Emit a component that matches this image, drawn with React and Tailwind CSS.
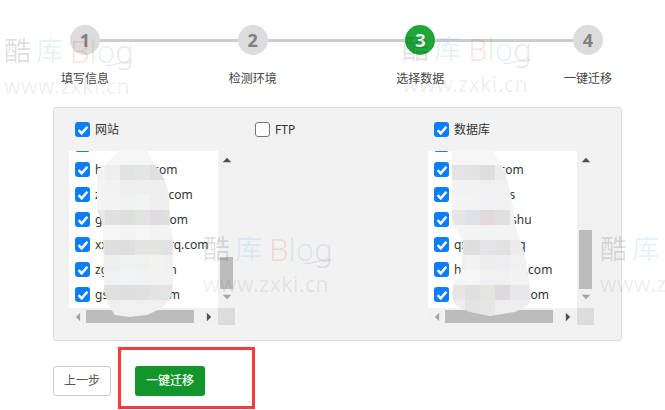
const Check = ({ on = true }) =>
  on ? (
    <span className="flex h-[15px] w-[15px] shrink-0 items-center justify-center rounded-[3px] bg-[#0b7dfd]">
      <svg width="12" height="12" viewBox="0 0 12 12" fill="none">
        <path d="M1.6 6.2 4.7 9.3 10.4 2.8" stroke="#fff" strokeWidth="2.5" />
      </svg>
    </span>
  ) : (
    <span className="h-[15px] w-[15px] shrink-0 rounded-[3px] border border-[#767676] bg-white" />
  );

const Arrow = ({ dir, className }) => {
  const d = { up: "M0 6 5 1 10 6Z", down: "M0 1 10 1 5 6Z", left: "M6 0 6 10 1 5Z", right: "M1 0 1 10 6 5Z" }[dir];
  const horizontal = dir === "left" || dir === "right";
  return (
    <svg width={horizontal ? 7 : 10} height={horizontal ? 10 : 7} viewBox={horizontal ? "0 0 7 10" : "0 0 10 7"} className={className}>
      <path d={d} />
    </svg>
  );
};

const ListBox = ({ rows, thumbTop, thumbHeight }) => (
  <div className="grid w-[166px] grid-cols-[149px_17px] grid-rows-[157px_17px]">
    <div className="overflow-hidden bg-white">
      <div className="-mt-[19px]">
        {rows.map((r, i) => (
          <div key={i} className="flex h-[25px] items-center gap-[5px] whitespace-nowrap pl-[6px] text-[12px] leading-[25px] text-[#333]">
            <Check />
            <span>{r}</span>
          </div>
        ))}
      </div>
    </div>
    <div className="flex flex-col items-center bg-[#f1f1f1]">
      <Arrow dir="up" className="mt-[6px] h-[6px] fill-[#505050]" />
      <div className="w-[13px] shrink-0 bg-[#bcbcbc]" style={{ marginTop: thumbTop, height: thumbHeight }} />
      <Arrow dir="down" className="mt-[5px] h-[6px] fill-[#a3a3a3]" />
    </div>
    <div className="flex items-center bg-[#f1f1f1]">
      <Arrow dir="left" className="ml-[6px] w-[6px] fill-[#a3a3a3]" />
      <div className="ml-[5px] h-[13px] w-[108px] bg-[#bcbcbc]" />
      <Arrow dir="right" className="ml-[12px] w-[6px] fill-[#505050]" />
    </div>
    <div className="bg-[#dcdcdc]" />
  </div>
);

const Header = ({ label, on }) => (
  <div className="flex h-[15px] items-center gap-[5px] pl-[6px] text-[12px] leading-[15px] text-[#333]">
    <Check on={on} />
    <span>{label}</span>
  </div>
);

const steps = [
  ["1", "填写信息"],
  ["2", "检测环境"],
  ["3", "选择数据"],
  ["4", "一键迁移"],
];

const Watermark = ({ className }) => (
  <div className={"pointer-events-none absolute w-[130px] " + className}>
    <div className="flex h-[42px] items-center whitespace-nowrap text-[27px] leading-[42px]">
      <span className="text-[#000]/[.13]">酷</span>
      <span className="ml-[5px] text-[#2b9ae8]/[.13]">库</span>
      <span className="ml-[7px] text-[31px] font-light">
        <span className="text-[#e8483c]/[.17]">B</span>
        <span className="text-[#3bb04a]/[.17]">l</span>
        <span className="text-[#3a95d8]/[.15]">o</span>
        <span className="text-[#4a4a9a]/[.14]">g</span>
      </span>
    </div>
    <svg width="30" height="8" viewBox="0 0 30 8" fill="none" className="absolute left-[100px] top-[30px]">
      <path d="M1 5C7 7 12 3 17 3C22 3 25 4 28 1" stroke="#4a4a9a" strokeOpacity=".14" strokeWidth="1.2" />
    </svg>
    <div className="mt-[3px] whitespace-nowrap text-[21px] leading-[22px] tracking-[.5px] text-[#000]/[.08]">www.zxki.cn</div>
  </div>
);

const leftCells = [
  "bg-[#f6f6f6]", "bg-[#f6f6f6]", "bg-[#f6f6f6]", "bg-[#f6f6f6]", "bg-[#f6f6f6]", "bg-[#f6f6f6]",
  "bg-[#f2f2f2]", "bg-[#eeeeee]", "bg-[#e2e2e2]", "bg-[#e2e6e6]", "bg-[#dfdfdf]", "bg-[#e8e8e8]",
  "bg-[#f4f4f4]", "bg-[#f2f2f2]", "bg-[#eeeeee]", "bg-[#eeeeee]", "bg-[#eeeeee]", "bg-[#f0f0f0]",
  "bg-[#f4f4f4]", "bg-[#f3f3f3]", "bg-[#f1f1f1]", "bg-[#f1f4f2]", "bg-[#efefef]", "bg-[#f0f0f0]",
  "bg-[#e8e8e8]", "bg-[#e0e0e0]", "bg-[#dfdfdf]", "bg-[#e2e4e2]", "bg-[#dedcde]", "bg-[#dfdfdd]",
  "bg-[#f4f4f4]", "bg-[#f5f5f5]", "bg-[#f4f4f4]", "bg-[#f5f5f5]", "bg-[#f3f3f3]", "bg-[#f2f2f2]",
  "bg-[#e4e4e4]", "bg-[#dfdfdf]", "bg-[#dedede]", "bg-[#e3e3e3]", "bg-[#e3e3df]", "bg-[#e2e2e2]",
  "bg-[#f0f0f0]", "bg-[#eeeeee]", "bg-[#f0f2f2]", "bg-[#f0f0f0]", "bg-[#f2f2f0]", "bg-[#f0f0f0]",
  "bg-[#f4f4f4]", "bg-[#f2f2f2]", "bg-[#f1f4f4]", "bg-[#f2f2f2]", "bg-[#f2f2f2]", "bg-[#f2f2f2]",
  "bg-[#e6e6e6]", "bg-[#e0e0e0]", "bg-[#dedfe0]", "bg-[#e0e0e0]", "bg-[#e2e4e4]", "bg-[#e4e4e4]",
  "bg-[#f0f0f0]", "bg-[#f0f0f0]", "bg-[#f0f0f0]", "bg-[#f0f0f0]", "bg-[#f0f0f0]", "bg-[#f0f0f0]",
  "bg-[#efefef]", "bg-[#efefef]", "bg-[#efefef]", "bg-[#efefef]", "bg-[#efefef]", "bg-[#efefef]",
];

const rightCells = [
  "bg-[#f6f6f6]", "bg-[#f6f6f6]", "bg-[#f6f6f6]", "bg-[#f6f6f6]", "bg-[#f6f6f6]", "bg-[#f6f6f6]",
  "bg-[#e4e4e4]", "bg-[#e2e2e2]", "bg-[#dedede]", "bg-[#ececec]", "bg-[#f0f0f0]", "bg-[#f0f0f0]",
  "bg-[#f2f2f2]", "bg-[#f2f2f2]", "bg-[#f0f0f0]", "bg-[#f1f1f1]", "bg-[#f2f2f2]", "bg-[#f2f2f2]",
  "bg-[#f4f4f4]", "bg-[#f3f3f3]", "bg-[#f1f1f4]", "bg-[#f0f0f0]", "bg-[#f3f3f3]", "bg-[#f3f3f3]",
  "bg-[#e6e4e4]", "bg-[#dde2e6]", "bg-[#e3d9dc]", "bg-[#e0e0e0]", "bg-[#f0f0f0]", "bg-[#f0f0f0]",
  "bg-[#f4f4f4]", "bg-[#f4f4f4]", "bg-[#f3f3f3]", "bg-[#f3f3f3]", "bg-[#f3f3f3]", "bg-[#f3f3f3]",
  "bg-[#e2e2e2]", "bg-[#dfdfdf]", "bg-[#e4e4e6]", "bg-[#e2e2e2]", "bg-[#ececec]", "bg-[#ececec]",
  "bg-[#eeeeee]", "bg-[#f2f2f2]", "bg-[#ededed]", "bg-[#eeeef0]", "bg-[#f0f0f0]", "bg-[#f0f0f0]",
  "bg-[#f5f5f5]", "bg-[#f5f5f5]", "bg-[#f0f0f0]", "bg-[#f0f0f0]", "bg-[#f2f2f2]", "bg-[#f2f2f2]",
  "bg-[#e6e6e6]", "bg-[#e0e0e0]", "bg-[#e4e4e0]", "bg-[#dddadd]", "bg-[#e8e8ea]", "bg-[#e8e8ea]",
  "bg-[#eeeeee]", "bg-[#e3e3e3]", "bg-[#e6e6e6]", "bg-[#eeeeee]", "bg-[#eeeeee]", "bg-[#eeeeee]",
  "bg-[#efefef]", "bg-[#efefef]", "bg-[#efefef]", "bg-[#efefef]", "bg-[#efefef]", "bg-[#efefef]",
];

const Mosaic = ({ cells, className }) => (
  <div className={"pointer-events-none absolute grid w-[90px] grid-cols-[repeat(6,15px)] auto-rows-[15px] " + className}>
    {cells.map((c, i) => (
      <div key={i} className={c} />
    ))}
  </div>
);

const leftRows = ["", "hxxxxxxix.com", "zxxxxxxxxxn.com", "gxxxxxxxxn.com", "xxuxxxxxxxxirq.com", "zgxxxxxxi.com", "gsxxxxxxx.com"];
const rightRows = ["", "wxxxxn.com", "wxxxxxxirs", "wxxxxxxxishu", "qxxxxxxxxxq", "hxxxxxxxxxx.com", "gxxxxxxxxxi.com"];

export default function App() {
  return (
    <div className="relative h-[410px] w-[665px] overflow-hidden bg-white font-['Noto_Sans','Noto_Sans_CJK_SC',sans-serif]">
      <div className="mx-[53px] w-[569px] pt-[25px]">
        <div className="ml-[17px] mr-[19px] flex items-center">
          {steps.map(([n], i) => (
            <div key={n} className={i < 3 ? "flex flex-1 items-center" : "flex items-center"}>
              <div className={(n === "3" ? "bg-[#20a53a] text-white" : "bg-[#dcdcdc] text-[#808080]") + " flex h-[30px] w-[30px] shrink-0 items-center justify-center rounded-full text-[18px] font-bold leading-[30px]"}>
                {n}
              </div>
              {i < 3 && <div className="h-[3px] flex-1 bg-[#cccccc]" />}
            </div>
          ))}
        </div>
        <div className="ml-[8px] mr-[10px] mt-[15px] flex justify-between">
          {steps.map(([n, label]) => (
            <div key={n} className="w-[48px] text-center text-[12px] leading-[18px] text-[#444]">{label}</div>
          ))}
        </div>

        <div className="mt-[19px] grid h-[234px] grid-cols-[180px_179px_1fr] rounded-[3px] border border-[#dddddd] bg-[#f2f2f2] pl-[15px] pt-[14px]">
          <div>
            <Header label="网站" on />
            <div className="mt-[14px]"><ListBox rows={leftRows} thumbTop="94px" thumbHeight="32px" /></div>
          </div>
          <div><Header label="FTP" on={false} /></div>
          <div>
            <Header label="数据库" on />
            <div className="mt-[14px]"><ListBox rows={rightRows} thumbTop="67px" thumbHeight="59px" /></div>
          </div>
        </div>

        <div className="mt-[25px] flex gap-[24px]">
          <button className="h-[30px] w-[58px] rounded-[3px] border border-[#cccccc] bg-white text-[12px] text-[#555]">上一步</button>
          <button className="h-[30px] w-[70px] rounded-[3px] bg-[#12962b] text-[12px] font-medium text-white">一键迁移</button>
        </div>
      </div>

      <Mosaic cells={leftCells} className="left-[90px] top-[150px] [clip-path:polygon(30px_0,57px_0,63px_12px,68px_19px,75px_30px,79px_44px,80px_75px,83px_90px,83px_135px,80px_150px,72px_158px,57px_165px,40px_167px,25px_165px,18px_155px,14px_140px,13px_75px,7px_60px,7px_20px,15px_15px)]" />
      <Mosaic cells={rightCells} className="left-[450px] top-[150px] [clip-path:polygon(3px_0,43px_0,52px_15px,57px_30px,62px_50px,65px_75px,70px_90px,75px_105px,78px_125px,81px_145px,78px_155px,65px_162px,40px_166px,20px_162px,5px_155px,2px_145px,3px_135px,12px_120px,13px_90px,5px_78px,2px_70px,2px_5px)]" />

      <Watermark className="left-[4px] top-[30px]" />
      <Watermark className="left-[402px] top-[28px]" />
      <Watermark className="left-[203px] top-[228px]" />
      <Watermark className="left-[600px] top-[228px]" />

      <div className="pointer-events-none absolute left-[118px] top-[347px] h-[62px] w-[137px] border-[3px] border-[#f53c3c]" />
    </div>
  );
}
